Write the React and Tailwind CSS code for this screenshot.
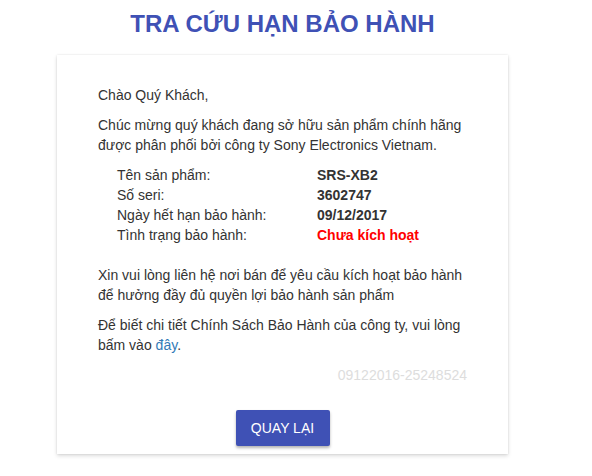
export default function App() {
  const rows = [
    { label: "Tên sản phẩm:", value: "SRS-XB2" },
    { label: "Số seri:", value: "3602747" },
    { label: "Ngày hết hạn bảo hành:", value: "09/12/2017" },
    { label: "Tình trạng bảo hành:", value: "Chưa kích hoạt", red: true },
  ];

  return (
    <div className="w-[592px] h-[476px] bg-white font-['Liberation_Sans',Arial,sans-serif] text-[14px] leading-[20px] text-[#333]">
      <div className="w-[451px] ml-[57px] pt-[10px]">
        <h1 className="text-center text-[24px] leading-[28px] font-bold text-[#3f51b5] mb-[17px]">
          TRA CỨU HẠN BẢO HÀNH
        </h1>

        <div className="bg-white h-[399px] px-[41px] pt-[30px] shadow-[0_2px_4px_rgba(0,0,0,0.14),0_0_2px_rgba(0,0,0,0.1)] flex flex-col">
          <p className="mb-[10px]">Chào Quý Khách,</p>
          <p className="mb-[10px]">
            Chúc mừng quý khách đang sở hữu sản phẩm chính hãng được phân phối bởi công ty Sony Electronics Vietnam.
          </p>

          <div className="pl-[19px] mb-[20px]">
            {rows.map((r) => (
              <div key={r.label} className="flex">
                <span className="w-[200px]">{r.label}</span>
                <span className={r.red ? "font-bold text-[#ff0000]" : "font-bold text-[#333]"}>
                  {r.value}
                </span>
              </div>
            ))}
          </div>

          <p className="mb-[10px]">
            Xin vui lòng liên hệ nơi bán để yêu cầu kích hoạt bảo hành để hưởng đầy đủ quyền lợi bảo hành sản phẩm
          </p>
          <p className="mb-[10px]">
            Để biết chi tiết Chính Sách Bảo Hành của công ty, vui lòng bấm vào{" "}
            <a href="#" className="text-[#337ab7]">đây</a>.
          </p>

          <p className="text-right text-[#ddd]">09122016-25248524</p>

          <div className="flex justify-center mt-[25px]">
            <button className="w-[94px] h-[36px] rounded-[2px] bg-[#3f51b5] text-white text-[14px] font-medium shadow-[0_2px_3px_rgba(0,0,0,0.3)]">
              QUAY LẠI
            </button>
          </div>
        </div>
      </div>
    </div>
  );
}
